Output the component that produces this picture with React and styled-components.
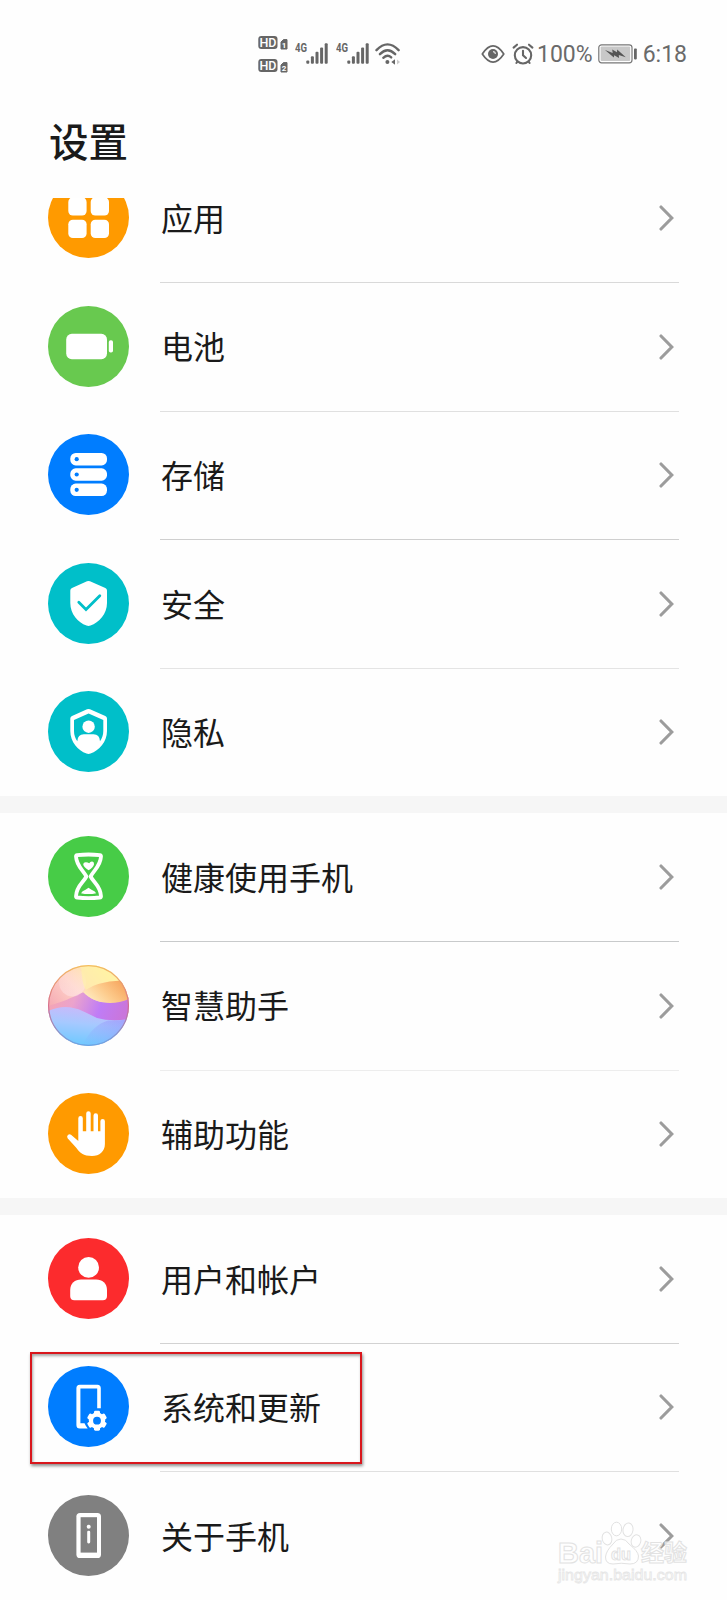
import React from "react";
import styled, { createGlobalStyle } from "styled-components";

const GlobalStyle = createGlobalStyle`
  * {
    box-sizing: border-box;
  }
  body {
    margin: 0;
    background: #fefefe;
    font-family: "Noto Sans CJK SC", "Noto Sans", sans-serif;
    color: #1a1a1a;
  }
`;

const Screen = styled.div`
  position: relative;
  width: 727px;
  height: 1600px;
  overflow: hidden;
  background: #fefefe;
  display: flex;
  flex-direction: column;
`;

const StatusBar = styled.header`
  flex: none;
  height: 108px;
  padding: 0 40px 0 258px;
  display: flex;
  justify-content: space-between;
  align-items: center;
  color: #6a6a6a;
`;

const StatusGroup = styled.div`
  display: flex;
  align-items: center;
`;

const StatusText = styled.span`
  font-family: Roboto, sans-serif;
  font-size: 23px;
  line-height: 28px;
  margin: 2px ${(p) => p.$right || 0}px 0 ${(p) => p.$left || 0}px;
`;

const Glyph = styled.svg`
  display: block;
  flex: none;
  margin-left: ${(p) => p.$left || 0}px;
`;

const Title = styled.h1`
  flex: none;
  height: 90px;
  margin: 0;
  padding: 3px 0 0 49px;
  font-size: 39.5px;
  line-height: 58px;
  font-weight: 500;
`;

const ListViewport = styled.main`
  flex: 1;
  min-height: 0;
  overflow: hidden;
`;

const List = styled.div`
  margin-top: -43.6px;
`;

const Section = styled.section`
  height: ${(p) => p.$height}px;
  & + & {
    box-sizing: content-box;
    border-top: 17px solid #f6f6f6;
  }
`;

const RowItem = styled.div`
  position: relative;
  height: 128.6px;
  padding: 0 48px;
  display: flex;
`;

const RowIcon = styled.svg`
  display: block;
  flex: none;
  width: 81px;
  height: 81px;
  margin: 22.5px 31px 0 0;
`;

const RowBody = styled.div`
  flex: 1;
  display: flex;
  justify-content: space-between;
  border-bottom: 1px solid ${(p) => p.$line || "transparent"};
`;

const Label = styled.span`
  height: 36px;
  padding-left: 1px;
  margin-top: 44.4px;
  font-size: 32px;
  line-height: 36px;
`;

const Arrow = styled.svg`
  display: block;
  width: 16px;
  height: 28px;
  margin: 49.5px 4px 0 0;
`;

const Highlight = styled.div`
  position: absolute;
  left: 30px;
  top: 8px;
  width: 332px;
  height: 112px;
  border: 2px solid #d9161c;
  box-shadow: 1px 2px 3px rgba(0, 0, 0, 0.45), inset 1px 2px 3px rgba(0, 0, 0, 0.35);
`;

const Watermark = styled.svg`
  position: absolute;
  left: 550px;
  top: 1515px;
`;

const SHIELD =
  "M39 18.3Q40.5 17.6 42 18.3L57.3 25Q59 25.8 59 27.6V40C59 51 51 59.5 42.5 62.6Q40.5 63.3 38.5 62.6C30 59.5 22.3 51 22.3 40V27.6Q22.3 25.8 24 25Z";

const AppsIcon = () => (
  <>
    <circle cx="40.5" cy="40.5" r="40.5" fill="#ff9a00" />
    <g fill="#fff">
      <rect x="20.3" y="20.3" width="18.3" height="18.3" rx="4.6" />
      <rect x="42.7" y="20.3" width="18.3" height="18.3" rx="4.6" />
      <rect x="20.3" y="42.7" width="18.3" height="18.3" rx="4.6" />
      <rect x="42.7" y="42.7" width="18.3" height="18.3" rx="4.6" />
    </g>
  </>
);

const BatteryIcon = () => (
  <>
    <circle cx="40.5" cy="40.5" r="40.5" fill="#68c94f" />
    <rect x="18.2" y="27.8" width="40.8" height="25.4" rx="5.6" fill="#fff" />
    <rect x="60.8" y="34.3" width="4.2" height="12.2" rx="1.8" fill="#fff" />
  </>
);

const StorageIcon = () => (
  <>
    <circle cx="40.5" cy="40.5" r="40.5" fill="#007dff" />
    {[19, 34.3, 49.6].map((y) => (
      <g key={y}>
        <rect x="22.3" y={y} width="36.7" height="12.4" rx="5.4" fill="#fff" />
        <circle cx="28.7" cy={y + 6.2} r="2.1" fill="#007dff" />
      </g>
    ))}
  </>
);

const SecurityIcon = () => (
  <>
    <circle cx="40.5" cy="40.5" r="40.5" fill="#00bfc9" />
    <path d={SHIELD} fill="#fff" />
    <path d="M30.8 39.3L38 46.5L51.8 32.7" fill="none" stroke="#00bfc9" strokeWidth="2.8" strokeLinecap="round" />
  </>
);

const PrivacyIcon = () => (
  <>
    <circle cx="40.5" cy="40.5" r="40.5" fill="#00bfc9" />
    <path d={SHIELD} fill="#fff" />
    <path
      d="M40.6 22.6L55.3 29V40C55.3 44 54 47.5 52 50.2Q51.6 43.3 45.5 43.3H35.8Q29.8 43.3 29.3 50.2C27.3 47.5 26 44 26 40V29Z"
      fill="#00bfc9"
    />
    <circle cx="40.6" cy="35.7" r="6.2" fill="#fff" />
  </>
);

const HourglassIcon = () => (
  <>
    <circle cx="40.5" cy="40.5" r="40.5" fill="#47cc47" />
    <path
      d="M28 20.4Q28 19.4 29.2 19.2Q40.5 17.8 51.8 19.2Q53 19.4 53 20.4C52.6 30 46 34 42.6 40.5C46 47 52.6 50 53 60.2Q53 61.4 51.8 61.5Q40.5 62.6 29.2 61.5Q28 61.4 28 60.2C28.4 50 35 47 38.4 40.5C35 34 28.4 30 28 20.4Z"
      fill="none"
      stroke="#fff"
      strokeWidth="3.8"
      strokeLinejoin="round"
    />
    <path d="M40.6 34.3C37.5 32.3 35.4 30.3 35.2 28.2Q35.5 26 38 26.2Q39.8 26.4 41.2 27.2Q42.4 25.2 44.3 25.5Q46.5 26 46 28.4C45.5 30.5 43.5 32.5 40.6 34.3Z" fill="#fff" />
    <path d="M33 57.2Q34 55 37.5 53.8L40.5 51.8L43.5 53.8Q47 55 48.2 57.2Q40.5 59 33 57.2Z" fill="#fff" />
  </>
);

const AssistantIcon = () => (
  <>
    <defs>
      <clipPath id="orb">
        <circle cx="40.5" cy="40.5" r="40.5" />
      </clipPath>
      <linearGradient id="orbTop" x1="0" y1="0.55" x2="0.65" y2="0">
        <stop offset="0" stopColor="#f4a6b2" />
        <stop offset="0.5" stopColor="#ffd3c8" />
        <stop offset="1" stopColor="#fff0a6" />
      </linearGradient>
      <linearGradient id="orbOrange" x1="0" y1="0.8" x2="1" y2="0.3">
        <stop offset="0" stopColor="#fff0c8" />
        <stop offset="0.5" stopColor="#fdcb8c" />
        <stop offset="1" stopColor="#f6a45c" />
      </linearGradient>
      <linearGradient id="orbPurple" x1="0" y1="0" x2="1" y2="0.15">
        <stop offset="0" stopColor="#f5a5b0" />
        <stop offset="0.35" stopColor="#eba3cc" />
        <stop offset="0.7" stopColor="#bf7cf6" />
        <stop offset="1" stopColor="#c976dc" />
      </linearGradient>
      <linearGradient id="orbBlue" x1="0.6" y1="0" x2="0.4" y2="1">
        <stop offset="0" stopColor="#cdb8fa" />
        <stop offset="0.45" stopColor="#a6c9ff" />
        <stop offset="1" stopColor="#6cc9ff" />
      </linearGradient>
      <linearGradient id="orbShade" x1="0" y1="1" x2="1" y2="0.2">
        <stop offset="0" stopColor="#8d8dfa" stopOpacity="0" />
        <stop offset="1" stopColor="#8878fa" stopOpacity="0.4" />
      </linearGradient>
      <linearGradient id="orbRim" x1="0" y1="0" x2="0" y2="1">
        <stop offset="0" stopColor="#f3bd62" />
        <stop offset="0.5" stopColor="#d56c8b" />
        <stop offset="1" stopColor="#6ba3e4" />
      </linearGradient>
      <linearGradient id="orbGlow" x1="0.5" y1="0" x2="0.5" y2="1">
        <stop offset="0" stopColor="#fff" stopOpacity="0" />
        <stop offset="1" stopColor="#ffeaf0" stopOpacity="0.45" />
      </linearGradient>
    </defs>
    <g clipPath="url(#orb)">
      <rect width="81" height="81" fill="url(#orbTop)" />
      <path d="M0 41C18 36 22 33 36 27C46 38 60 41 81 31V60H0Z" fill="url(#orbPurple)" />
      <ellipse cx="24.5" cy="17" rx="13.5" ry="14.5" fill="url(#orbGlow)" />
      <path d="M33 0Q34 20 38 25Q55 14 81 15V0Z" fill="#fff3a5" opacity="0.6" />
      <path d="M35 27C48 17 62 16 81 15V34C65 41 46 39 35 27Z" fill="url(#orbOrange)" />
      <path d="M0 46C22 36 36 47 49 53Q63 57 81 54V81H0Z" fill="url(#orbBlue)" />
      <path d="M34 81Q44 60 60 55.4Q70 56 81 54V81Z" fill="url(#orbShade)" />
    </g>
    <circle cx="40.5" cy="40.5" r="39.9" fill="none" stroke="url(#orbRim)" strokeWidth="1.1" />
  </>
);

const HandIcon = () => (
  <>
    <circle cx="40.5" cy="40.5" r="40.5" fill="#ff9a00" />
    <path
      d="M30.3 25.2a2.25 2.25 0 0 1 4.5 0V38.2h3.4V20.4a2.25 2.25 0 0 1 4.5 0V38.2h2.8V22.6a2.25 2.25 0 0 1 4.5 0V38.2h2.4V28.2a2.25 2.25 0 0 1 4.5 0V51C56.9 58.5 51.5 63 44 63C35.5 63 31.5 59.5 28 54.5L19.6 45.2a2.5 2.5 0 0 1 3.4-3.5L30.3 48Z"
      fill="#fff"
    />
  </>
);

const UserIcon = () => (
  <>
    <circle cx="40.5" cy="40.5" r="40.5" fill="#fc2b2d" />
    <circle cx="40.6" cy="29.4" r="10.4" fill="#fff" />
    <path d="M22.2 52C22.2 45 27 41.4 33 41.4H48.2C54.2 41.4 59 45 59 52V58Q59 62.2 54.8 62.2H26.4Q22.2 62.2 22.2 58Z" fill="#fff" />
  </>
);

const SystemIcon = () => (
  <>
    <circle cx="40.5" cy="40.5" r="40.5" fill="#007dff" />
    <path
      d="M49.2 42.2V22.6H32.4V57.2H36.5Q37.5 59.5 39.7 62.5H31.8Q28.4 62.5 28.4 59V22.3Q28.4 18.8 31.8 18.8H49.4Q52.8 18.8 52.8 22.3V42.2Z"
      fill="#fff"
    />
    <g fill="#fff">
      {[0, 60, 120].map((deg) => (
        <rect key={deg} x="46" y="44.7" width="6" height="20" rx="1.4" transform={`rotate(${deg} 49 54.7)`} />
      ))}
      <circle cx="49" cy="54.7" r="8.2" />
    </g>
    <circle cx="49" cy="54.7" r="3.9" fill="#007dff" />
  </>
);

const AboutIcon = () => (
  <>
    <circle cx="40.5" cy="40.5" r="40.5" fill="#808080" />
    <rect x="28.4" y="18" width="24.6" height="45" rx="3.6" fill="#fff" />
    <rect x="32.6" y="22.2" width="16.4" height="35.4" fill="#808080" />
    <circle cx="40.7" cy="31.8" r="2" fill="#fff" />
    <rect x="39.2" y="35.8" width="3" height="12.6" rx="1.3" fill="#fff" />
  </>
);

const SECTIONS = [
  {
    height: 642,
    rows: [
      { label: "应用", Icon: AppsIcon, line: "#d9d9d9" },
      { label: "电池", Icon: BatteryIcon, line: "#e0e0e0" },
      { label: "存储", Icon: StorageIcon, line: "#cfcfcf" },
      { label: "安全", Icon: SecurityIcon, line: "#e4e4e4" },
      { label: "隐私", Icon: PrivacyIcon },
    ],
  },
  {
    height: 384.8,
    rows: [
      { label: "健康使用手机", Icon: HourglassIcon, line: "#c8cacb" },
      { label: "智慧助手", Icon: AssistantIcon, line: "#ededed" },
      { label: "辅助功能", Icon: HandIcon },
    ],
  },
  {
    height: 386,
    rows: [
      { label: "用户和帐户", Icon: UserIcon, line: "#d2d2d2" },
      { label: "系统和更新", Icon: SystemIcon, line: "#e0e0e0", highlighted: true },
      { label: "关于手机", Icon: AboutIcon },
    ],
  },
];

const Row = ({ label, Icon, line, highlighted }) => (
  <RowItem>
    <RowIcon viewBox="0 0 81 81">
      <Icon />
    </RowIcon>
    <RowBody $line={line}>
      <Label>{label}</Label>
      <Arrow viewBox="0 0 16 28">
        <path d="M2 3L12.8 14L2 25" fill="none" stroke="#9c9c9c" strokeWidth="3.1" strokeLinecap="round" />
      </Arrow>
    </RowBody>
    {highlighted && <Highlight />}
  </RowItem>
);

const HdBadges = () => (
  <Glyph width="31" height="40" viewBox="0 -1 31 40">
    {[1, 2].map((sim, i) => (
      <g key={sim} transform={`translate(0 ${i * 23})`}>
        <rect x="0.3" y="1" width="19.2" height="13" rx="3" fill="#666" />
        <text x="9.9" y="12" textAnchor="middle" fontFamily="Roboto, sans-serif" fontSize="12.5" fontWeight="500" fill="#fff">
          HD
        </text>
        <path d="M23 7L25.5 4.6H29V14H23Z" fill="#666" stroke="#666" strokeWidth="1" strokeLinejoin="round" />
        <text x="26.1" y="12.8" textAnchor="middle" fontFamily="Roboto, sans-serif" fontSize="8" fontWeight="700" fill="#fff">
          {sim}
        </text>
      </g>
    ))}
  </Glyph>
);

const Signal = ({ left }) => (
  <Glyph $left={left} width="35" height="32" viewBox="0 -4 35 32">
    <text x="0" y="10.4" fontFamily="Roboto, sans-serif" fontSize="13" fontWeight="700" fill="#666" textLength="12" lengthAdjust="spacingAndGlyphs">
      4G
    </text>
    <g fill="#666">
      <rect x="11.3" y="18.6" width="3" height="3.2" rx="1" />
      <rect x="15.9" y="14.2" width="3" height="7.6" rx="1" />
      <rect x="20.5" y="9.8" width="3" height="12" rx="1" />
      <rect x="25.1" y="5.6" width="3" height="16.2" rx="1" />
      <rect x="29.7" y="1.2" width="3" height="20.6" rx="1" />
    </g>
  </Glyph>
);

const Wifi = () => (
  <Glyph $left={4} width="26" height="24" viewBox="0 0 26 24">
    <g fill="none" stroke="#666" strokeWidth="2.4" strokeLinecap="round">
      <path d="M1.5 8.2Q12.5 -3.4 23.6 8.2" />
      <path d="M4.9 12.2Q12.5 4.4 20.2 12.2" />
      <path d="M8.3 15.8Q12.5 12 16.2 15.4" />
    </g>
    <circle cx="12.4" cy="20" r="2" fill="#666" />
    <path d="M16.3 20L20 17.2V22.8Z" fill="#666" />
    <path d="M25 20L22 17.4V22.6Z" fill="#ccc" />
  </Glyph>
);

const Eye = () => (
  <Glyph width="24" height="20" viewBox="0 0 24 20">
    <path d="M1.3 10Q12 -6.2 22.8 10Q12 26.2 1.3 10Z" fill="none" stroke="#666" strokeWidth="1.7" strokeLinejoin="round" />
    <circle cx="12" cy="10" r="5" fill="#666" />
    <path d="M12 7.6Q14.3 7.8 14.4 10" fill="none" stroke="#ddd" strokeWidth="1.2" />
  </Glyph>
);

const Alarm = () => (
  <Glyph $left={6.5} width="22" height="23" viewBox="0 0 22 23">
    <g fill="none" stroke="#666" strokeWidth="2.1" strokeLinecap="round">
      <circle cx="11" cy="12.3" r="8.2" />
      <path d="M11 7.7V12.3L14 15" />
      <path d="M1.6 4.6L5 1.7M20.4 4.6L17 1.7M5.4 18.6L4.4 20M16.6 18.6L17.6 20" />
    </g>
  </Glyph>
);

const ChargingBattery = () => (
  <Glyph $left={1} width="40" height="20" viewBox="0 0 40 20">
    <rect x="0.8" y="0.8" width="33.2" height="18" rx="2.8" fill="#fff" stroke="#777" strokeWidth="1.2" />
    <rect x="2.6" y="2.6" width="29.6" height="14.4" rx="1" fill="#c8c8c8" />
    <path d="M7 6L14.7 9L14.2 5.6L19 8.3L19.2 5.6L27.8 13.2L20.8 11L21 14L16.2 11.2L15.8 13.4Z" fill="#555" />
    <rect x="36" y="4.4" width="2.8" height="11" rx="0.8" fill="#666" />
  </Glyph>
);

const BaiduWatermark = () => (
  <Watermark width="150" height="75" viewBox="0 0 150 75">
    <g fill="#fff" fillOpacity="0.6" stroke="#e2e2e2" strokeWidth="1" fontWeight="700">
      <ellipse cx="57" cy="23.5" rx="4.8" ry="6.5" transform="rotate(-12 57 23.5)" />
      <ellipse cx="66.5" cy="14" rx="5.2" ry="6.8" />
      <ellipse cx="78" cy="14.8" rx="5" ry="6.8" transform="rotate(8 78 14.8)" />
      <ellipse cx="86" cy="26" rx="4.8" ry="6.3" transform="rotate(15 86 26)" />
      <path d="M71 24Q76 24 79 29Q88 36 88.5 41Q88.5 49 80 49Q71 47.5 63 49Q55.5 49 55.5 42Q56 36 63 29Q66 24 71 24Z" />
      <text x="8" y="47.5" fontFamily="Liberation Sans, sans-serif" fontSize="29" textLength="45" lengthAdjust="spacingAndGlyphs">
        Bai
      </text>
      <text x="61" y="45" fontFamily="Liberation Sans, sans-serif" fontSize="17" textLength="20" lengthAdjust="spacingAndGlyphs">
        du
      </text>
      <text x="91" y="46" fontFamily="Noto Sans CJK SC, sans-serif" fontSize="23" textLength="46" lengthAdjust="spacingAndGlyphs">
        经验
      </text>
    </g>
    <text
      x="8"
      y="65"
      fontFamily="Liberation Sans, sans-serif"
      fontSize="15"
      textLength="129"
      lengthAdjust="spacingAndGlyphs"
      fill="#fff"
      stroke="#e6e6e6"
      strokeWidth="0.8"
    >
      jingyan.baidu.com
    </text>
  </Watermark>
);

const App = () => (
  <>
    <GlobalStyle />
    <Screen>
      <StatusBar>
        <StatusGroup>
          <HdBadges />
          <Signal left={6} />
          <Signal left={5.5} />
          <Wifi />
        </StatusGroup>
        <StatusGroup>
          <Eye />
          <Alarm />
          <StatusText $left={3.5} $right={4}>100%</StatusText>
          <ChargingBattery />
          <StatusText $left={5}>6:18</StatusText>
        </StatusGroup>
      </StatusBar>
      <Title>设置</Title>
      <ListViewport>
        <List>
          {SECTIONS.map((section) => (
            <Section key={section.rows[0].label} $height={section.height}>
              {section.rows.map((row) => (
                <Row key={row.label} {...row} />
              ))}
            </Section>
          ))}
        </List>
      </ListViewport>
      <BaiduWatermark />
    </Screen>
  </>
);

export default App;
